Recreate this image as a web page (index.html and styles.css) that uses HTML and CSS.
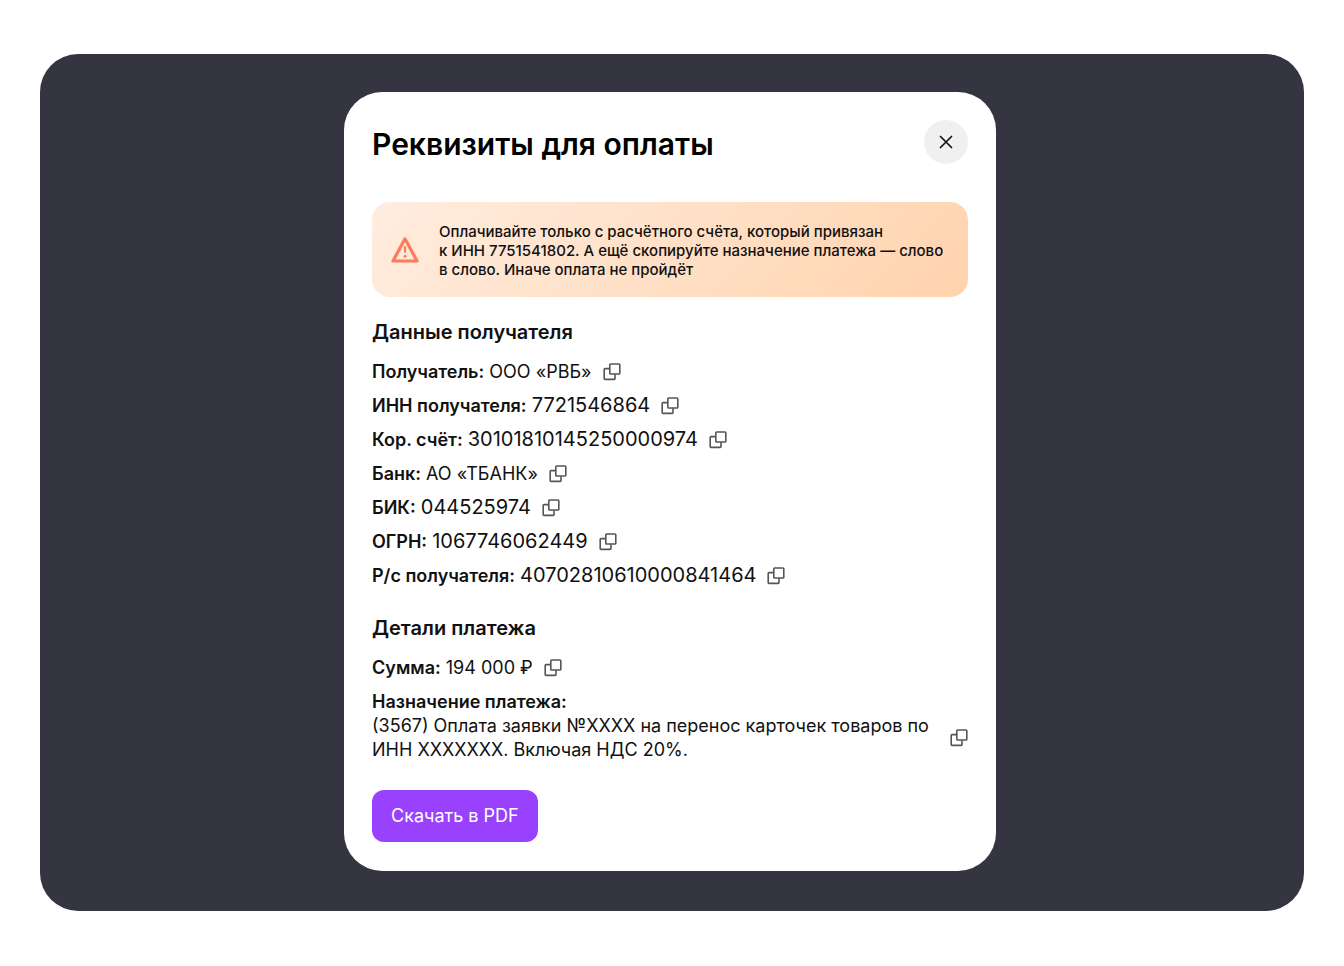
FILE: index.html
```html
<!DOCTYPE html>
<html lang="ru">
<head>
  <meta charset="UTF-8" />
  <meta name="viewport" content="width=device-width, initial-scale=1" />
  <title>Реквизиты для оплаты</title>
  <link rel="stylesheet" href="styles.css">
</head>
<body>

<svg class="sprite" aria-hidden="true">
  <symbol id="icon-copy" viewBox="0 0 18 18">
    <rect x="6.8" y="1" width="10" height="10" rx=".8" fill="none" stroke="currentColor" stroke-width="1.6" />
    <path d="M6.5 5.6H2a.8.8 0 0 0-.8.8v9.2a.8.8 0 0 0 .8.8h9.2a.8.8 0 0 0 .8-.8v-4.3" fill="none" stroke="currentColor" stroke-width="1.6" />
  </symbol>
</svg>

<main class="backdrop">
  <div class="modal" role="dialog" aria-labelledby="modal-title">
    <header class="modal-header">
      <h1 id="modal-title">Реквизиты для оплаты</h1>
      <button class="close-btn" type="button" aria-label="Закрыть">
        <svg width="14" height="14" viewBox="0 0 14 14"><path d="M1.5 1.5l11 11M12.5 1.5l-11 11" stroke="currentColor" stroke-width="1.7" stroke-linecap="round" /></svg>
      </button>
    </header>

    <div class="warning">
      <svg class="warning-icon" width="28" height="28" viewBox="0 0 28 28" fill="none">
        <path d="M14 1.8L2 24h24z" stroke="currentColor" stroke-width="3.2" stroke-linejoin="round" />
        <path d="M14 10v4.8" stroke="currentColor" stroke-width="2.2" stroke-linecap="round" />
        <circle cx="14" cy="19.2" r="1.5" fill="currentColor" />
      </svg>
      <p>Оплачивайте только с расчётного счёта, который привязан<br>к ИНН 7751541802. А ещё скопируйте назначение платежа — слово<br>в слово. Иначе оплата не пройдёт</p>
    </div>

    <section class="details">
      <h2>Данные получателя</h2>
      <div class="row">
        <p><b>Получатель:</b> ООО «РВБ»</p>
        <button class="copy-btn" type="button" aria-label="Копировать"><svg><use href="#icon-copy" /></svg></button>
      </div>
      <div class="row">
        <p><b>ИНН получателя:</b> <span class="num">7721546864</span></p>
        <button class="copy-btn" type="button" aria-label="Копировать"><svg><use href="#icon-copy" /></svg></button>
      </div>
      <div class="row">
        <p><b>Кор. счёт:</b> <span class="num">30101810145250000974</span></p>
        <button class="copy-btn" type="button" aria-label="Копировать"><svg><use href="#icon-copy" /></svg></button>
      </div>
      <div class="row">
        <p><b>Банк:</b> АО «ТБАНК»</p>
        <button class="copy-btn" type="button" aria-label="Копировать"><svg><use href="#icon-copy" /></svg></button>
      </div>
      <div class="row">
        <p><b>БИК:</b> <span class="num">044525974</span></p>
        <button class="copy-btn" type="button" aria-label="Копировать"><svg><use href="#icon-copy" /></svg></button>
      </div>
      <div class="row">
        <p><b>ОГРН:</b> <span class="num">1067746062449</span></p>
        <button class="copy-btn" type="button" aria-label="Копировать"><svg><use href="#icon-copy" /></svg></button>
      </div>
      <div class="row">
        <p><b>Р/с получателя:</b> <span class="num">40702810610000841464</span></p>
        <button class="copy-btn" type="button" aria-label="Копировать"><svg><use href="#icon-copy" /></svg></button>
      </div>
    </section>

    <section class="details">
      <h2>Детали платежа</h2>
      <div class="row">
        <p><b>Сумма:</b> 194 000 ₽</p>
        <button class="copy-btn" type="button" aria-label="Копировать"><svg><use href="#icon-copy" /></svg></button>
      </div>
      <div class="purpose">
        <b>Назначение платежа:</b>
        <div class="row">
          <p>(3567) Оплата заявки №ХХХХ на перенос карточек товаров по<br>ИНН ХХХХХХХ. Включая НДС 20%.</p>
          <button class="copy-btn" type="button" aria-label="Копировать"><svg><use href="#icon-copy" /></svg></button>
        </div>
      </div>
    </section>

    <button class="download-btn" type="button">Скачать в PDF</button>
  </div>
</main>

</body>
</html>
```
FILE: styles.css
```css
* {
  box-sizing: border-box;
}
body {
  margin: 0;
  padding: 54px 40px;
  background: #fff;
  color: #111;
  font-family: Inter, 'Liberation Sans', sans-serif;
  font-size: 18px;
  line-height: 24px;
}
h1, h2, p {
  margin: 0;
}
b {
  font-weight: 600;
}
button {
  border: none;
  padding: 0;
  font: inherit;
  cursor: pointer;
}
.sprite {
  display: none;
}
.backdrop {
  display: flex;
  justify-content: center;
  padding: 38px 24px 40px 20px;
  background: #353541;
  border-radius: 38px;
}
.modal {
  width: 100%;
  max-width: 652px;
  padding: 28px 28px 29px;
  background: #fff;
  border-radius: 38px;
}
.modal-header {
  display: flex;
  justify-content: space-between;
  align-items: flex-end;
  margin-bottom: 38px;
}
h1 {
  font-size: 30px;
  line-height: 40px;
  font-weight: 600;
  color: #000;
}
.close-btn {
  display: flex;
  align-items: center;
  justify-content: center;
  width: 44px;
  height: 44px;
  border-radius: 50%;
  background: #f0f0f0;
  color: #111;
}
.warning {
  display: flex;
  align-items: center;
  gap: 20px;
  padding: 20px 19px 18px;
  margin-bottom: 23px;
  border-radius: 18px;
  background: linear-gradient(135deg, #ffede0, #ffd3ad);
  font-size: 15px;
  line-height: 19px;
  font-weight: 500;
}
.warning-icon {
  flex: none;
  color: #fd7a5c;
}
.details {
  display: flex;
  flex-direction: column;
  gap: 10px;
  margin-bottom: 28px;
}
h2 {
  margin-bottom: 6px;
  font-size: 20px;
  line-height: 24px;
  font-weight: 600;
}
.row {
  display: flex;
  align-items: center;
  gap: 11px;
}
.purpose .row {
  justify-content: space-between;
}
.num {
  font-size: 20px;
  line-height: 20px;
}
.copy-btn {
  display: flex;
  flex: none;
  background: none;
  color: #555;
}
.copy-btn svg {
  width: 18px;
  height: 18px;
}
.download-btn {
  height: 52px;
  padding: 0 19px;
  border-radius: 12px;
  background: #9a41fe;
  color: #fff;
}
```
